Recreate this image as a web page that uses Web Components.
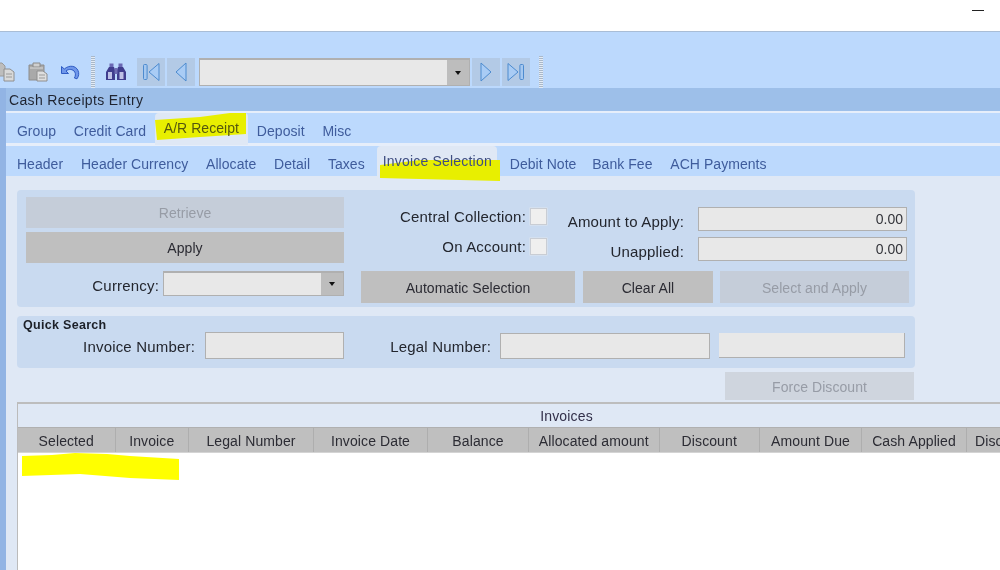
<!DOCTYPE html>
<html><head><meta charset="utf-8"><title>Cash Receipts Entry</title>
<style>
html,body{margin:0;padding:0;background:#fff}
body{width:1000px;height:570px;overflow:hidden;font-family:"Liberation Sans",Arial,sans-serif;color:#23262e}
</style></head><body>
<x-app></x-app>
<script>
function def(name,css,html,init){
  const t=document.createElement('template');
  t.innerHTML='<style>'+css+'</style>'+html;
  customElements.define(name,class extends HTMLElement{
    constructor(){super();this.attachShadow({mode:'open'}).appendChild(t.content.cloneNode(true));}
    connectedCallback(){if(init)init(this,this.shadowRoot);}
  });
}
const attr=(el,n,d='')=>el.hasAttribute(n)?el.getAttribute(n):d;

def('x-tbtn',`:host{display:flex;width:27.5px;height:28px;background:#b3cae6;align-items:center;justify-content:center}`,`<slot></slot>`);
def('x-tsep',`:host{display:block;width:4px;height:32px;background:repeating-linear-gradient(#a9b8c9 0 1px,#e3ebf5 1px 2px)}`,``);

def('x-combo',`:host{display:flex;box-sizing:border-box;background:#e8e8e8;border:1px solid #b0b0b0;border-top-width:2px}
.a{flex:1}.b{width:var(--bw,21px);background:#bdbdbd;display:flex;align-items:center;justify-content:center}
.b i{display:block;width:0;height:0;border:3.5px solid transparent;border-top:4px solid #111;border-bottom:0}`,
`<div class="a"></div><div class="b"><i></i></div>`);

def('x-toolbar',`:host{display:flex;align-items:flex-start;height:57px;box-sizing:border-box;background:#bcd9fd;padding-top:24px;border-top:1px solid #a9bdd6;overflow:hidden}
svg{display:block}
.row{display:flex;align-items:center;height:32px}
x-combo{width:271px;height:28px;--bw:22px}
`,
`<div class="row">
 <svg width="15" height="20" viewBox="0 0 15 20" style="margin:0 13px 0 0"><path d="M-5 1h7l3 3v10h-10z" fill="#bdbdbd" stroke="#9a9a9a"/><path d="M4 7h6l4 3v9H4z" fill="#d9d9d9" stroke="#8e8e8e"/><path d="M6 12h6M6 15h6" stroke="#9a9a9a"/></svg>
 <svg width="20" height="20" viewBox="0 0 20 20" style="margin-right:12px"><path d="M1 3h15v15H1z" fill="#a9a9a9" stroke="#8d8d8d"/><path d="M5 1h7v4H5z" fill="#cfcfcf" stroke="#8a8a8a"/><path d="M2 6h13" stroke="#d9d9d9"/><path d="M9 9h6l4 3v7H9z" fill="#dedede" stroke="#8e8e8e"/><path d="M11 13h6M11 16h6" stroke="#9a9a9a"/></svg>
 <svg width="20" height="16" viewBox="0 0 20 16" style="margin-right:11px"><path d="M1.500 2.500v7h7L6 7C8.600 4.600 13 5 14.800 8c1 1.900.7 4-.4 6l2.600.8c1.800-2.500 2.300-5.600 1-8.300C15.800 1.600 9.400.7 4.300 5z" fill="#6f97ea" stroke="#2f5cc4" stroke-width="1" stroke-linejoin="round"/></svg>
 <x-tsep></x-tsep>
 <svg width="20" height="18" viewBox="0 0 20 18" style="margin:0 11px"><path d="M3.500 .5h4v4h-4zM12.500 .5h4v4h-4z" fill="#6a68b4"/><path d="M3 4h5l1 3v10H0V9z" fill="#403d8e"/><path d="M12 4h5l3 5v8h-9V7z" fill="#403d8e"/><path d="M8.500 5h3v6h-3z" fill="#6f6db4"/><path d="M2 9h4v7H2zM13.500 9h4v7h-4z" fill="#bfc1e6"/></svg>
 <x-tbtn><svg width="20" height="20" viewBox="0 0 20 20"><rect x="2.500" y="2.500" width="3.600" height="15" rx="1" fill="#a5c8f0" stroke="#4d8bcf"/><path d="M18 1.500v17L8 10z" fill="#a9ccf5" stroke="#4d8bcf" stroke-linejoin="round"/></svg></x-tbtn>
 <x-tbtn style="margin:0 4px 0 2.500px"><svg width="14" height="22" viewBox="0 0 14 22"><path d="M12 2v18L2 11z" fill="#a9ccf5" stroke="#4d8bcf" stroke-linejoin="round"/></svg></x-tbtn>
 <x-combo></x-combo>
 <x-tbtn style="margin:0 2.500px"><svg width="14" height="22" viewBox="0 0 14 22"><path d="M2 2v18l10-9z" fill="#a9ccf5" stroke="#4d8bcf" stroke-linejoin="round"/></svg></x-tbtn>
 <x-tbtn style="margin-right:9px"><svg width="20" height="20" viewBox="0 0 20 20"><path d="M2 1.500v17L12 10z" fill="#a9ccf5" stroke="#4d8bcf" stroke-linejoin="round"/><rect x="13.900" y="2.500" width="3.600" height="15" rx="1" fill="#a5c8f0" stroke="#4d8bcf"/></svg></x-tbtn>
 <x-tsep></x-tsep>
</div>`);

def('x-tab',`:host{display:block;position:relative;box-sizing:border-box;padding:0 8.9px;height:100%;color:#3f5c9c}
span{position:relative;z-index:1;display:block;white-space:nowrap;font-size:14px;letter-spacing:.05px;line-height:var(--lh,36px)}
:host([active]){background:#dfe8f5;border-radius:4px 4px 0 0;color:var(--ac,#4a4a10);height:calc(100% + 2px)}
:host([active]) span{line-height:var(--alh,30px);letter-spacing:var(--als,.05px)}
svg{position:absolute;left:0;top:0;overflow:visible;z-index:0}
`,`<span><slot></slot></span>`,(el,r)=>{
  const p=attr(el,'mark');
  if(p&&!r.querySelector('svg')){
    const d=document.createElementNS('http://www.w3.org/2000/svg','svg');
    d.setAttribute('width','1');d.setAttribute('height','1');
    const g=document.createElementNS('http://www.w3.org/2000/svg','polygon');
    g.setAttribute('points',p);g.setAttribute('fill','#e8ef00');d.appendChild(g);r.appendChild(d);
  }
});
def('x-tabs',`:host{display:flex;background:#bcd9fd;height:var(--h,30px);padding-left:2px}`,`<slot></slot>`);

def('x-btn',`:host{display:flex;align-items:center;justify-content:center;box-sizing:border-box;background:#bfbfbf;color:#2b2b33;font-size:14px;letter-spacing:.05px;white-space:nowrap;padding-top:1px}
:host([disabled]){background:#c5cdd9;color:#979ca6}`,`<slot></slot>`);
def('x-field',`:host{display:flex;align-items:center;justify-content:flex-end;box-sizing:border-box;background:#e8e8e8;border:1.5px solid #b0b0b0;padding-right:3px;font-size:14px;color:#33343a}`,`<slot></slot>`);
def('x-check',`:host{display:block;box-sizing:border-box;width:17px;height:17px;background:#efefef;border:1.5px solid #c9cdd4;box-shadow:0 0 0 .5px #dfe5ee}`,``);
def('x-label',`:host{display:block;font-size:15px;letter-spacing:.18px;white-space:nowrap;text-align:right;color:#23262e}`,`<slot></slot>`);
def('x-panel',`:host{display:block;box-sizing:border-box;background:#c9daf0;border-radius:4px;width:898px}`,`<slot></slot>`);

def('x-grid',`:host{display:block;position:relative;width:1098px;height:172px;background:#fff;border-left:1px solid #bbb;border-top:2px solid #bdbdbd;box-sizing:border-box}
.cap{height:23px;line-height:25px;text-align:center;background:#dfe8f5;font-size:14px;letter-spacing:.15px;color:#33304a}
.head{display:grid;height:26px;background:#bfbfbf;border-top:1px solid #b0b0b0;border-bottom:1px solid #d4d4d4;box-sizing:border-box;
 grid-template-columns:97.500px 73.500px 125px 114px 101px 130.500px 100.500px 102px 105px 150px}
.head div{font-size:14px;letter-spacing:.1px;line-height:26px;text-align:center;white-space:nowrap;border-right:1px solid #aeaeae;color:#2c2c34;box-sizing:border-box;overflow:hidden}
.mark{position:absolute;left:4px;top:49px;overflow:visible}
`,`<div class="cap">Invoices</div>
<div class="head"><div>Selected</div><div>Invoice</div><div>Legal Number</div><div>Invoice Date</div><div>Balance</div><div>Allocated amount</div><div>Discount</div><div>Amount Due</div><div>Cash Applied</div><div style="text-align:left;padding-left:8px">Discount</div></div>
<svg class="mark" width="158" height="28" viewBox="0 0 158 28"><polygon points="0,3 30,2 53,0 85,1 108,3 157,6 157,27 108,25 58,21 0,23" fill="#ffff00"/></svg>`);

def('x-app',`:host{display:flex;flex-direction:column;width:1000px;height:570px;overflow:hidden;filter:blur(.35px)}
.top{height:31px;background:#fff;display:flex;justify-content:flex-end;padding:10px 16px 0 0;box-sizing:border-box}
.top i{display:block;width:12px;height:1px;background:#222}
.body{flex:1;display:flex;min-height:0}
.strip{width:6px;background:#92b4e4;flex:none}
.main{flex:1;display:flex;flex-direction:column;background:#dfe8f5;min-width:0}
.title{height:23px;background:#9dbfe9;font-size:14px;letter-spacing:.35px;line-height:24px;padding-left:3px;color:#1f2430;flex:none}
.gap{height:2px;background:#e6eefa;flex:none}.gap3{height:3px;background:#e6eefa;flex:none}
x-tabs.r1{--h:30px;--lh:37px;--alh:30px;--ac:#55580e}
x-tabs.r2{--h:30px;--lh:36px;--alh:31px;--ac:#3f4e80;--als:.2px}
.content{flex:1;padding:14px 0 0 11px;min-height:0;overflow:hidden}
.p1{height:117px;padding:7px 0 0 9px;display:flex;gap:17px}
.col1{width:318px;display:flex;flex-direction:column}
.col1 x-btn{height:31px;margin-bottom:4px}
.cur{display:flex;align-items:center;justify-content:flex-end;gap:4px;margin-top:4px}
.cur x-label{padding-top:4px}
.cur x-combo{width:181px;height:25px;--bw:22px}
.col2{width:548px;display:flex;flex-direction:column}
.upper{display:flex;height:74px;align-items:flex-start}
.chk{width:186px;display:flex;flex-direction:column;gap:13px;padding-top:11px}
.chk div{display:flex;align-items:center;justify-content:flex-end;gap:4px;height:17px}
.amt{display:grid;grid-template-columns:137px 209px;column-gap:14px;row-gap:6px;padding-top:10px;align-items:center}
.amt x-field{height:24px}
.amt x-label{padding-top:5px}
.btns{display:flex;gap:7px}
.btns x-btn{height:32px}
.p2{height:52px;margin-top:9px;padding:2px 0 0 6px}
.qt{font-size:12.5px;font-weight:bold;letter-spacing:.3px;line-height:14px;color:#1c2028;height:14px}
.qr{display:flex;align-items:center;height:27px}
.qr x-label{padding-top:1px}
.fd{display:flex;width:898px;justify-content:flex-end;height:34px;padding-top:4px;box-sizing:border-box}
.fd x-btn{width:189px;height:28px;margin-right:1px}
`,`<div class="top"><i></i></div>
<x-toolbar></x-toolbar>
<div class="body"><div class="strip"></div><div class="main">
 <div class="title">Cash Receipts Entry</div>
 <div class="gap"></div>
 <x-tabs class="r1"><x-tab>Group</x-tab><x-tab>Credit Card</x-tab><x-tab active mark="0,7 45,4 75,0 91,0 91,21 45,24 2,27">A/R Receipt</x-tab><x-tab>Deposit</x-tab><x-tab>Misc</x-tab></x-tabs>
 <div class="gap3"></div>
 <x-tabs class="r2"><x-tab>Header</x-tab><x-tab>Header Currency</x-tab><x-tab>Allocate</x-tab><x-tab>Detail</x-tab><x-tab>Taxes</x-tab><x-tab active style="margin-left:3px;padding-left:6px;padding-right:5px;margin-right:4px" mark="3,19 43,14 123,14 123,35 43,33 3,32">Invoice Selection</x-tab><x-tab style="padding-right:6.9px">Debit Note</x-tab><x-tab>Bank Fee</x-tab><x-tab>ACH Payments</x-tab></x-tabs>
 <div class="content">
  <x-panel class="p1" style="display:flex">
   <div class="col1"><x-btn disabled>Retrieve</x-btn><x-btn>Apply</x-btn><div class="cur"><x-label>Currency:</x-label><x-combo></x-combo></div></div>
   <div class="col2">
    <div class="upper">
     <div class="chk"><div><x-label>Central Collection:</x-label><x-check></x-check></div><div><x-label>On Account:</x-label><x-check></x-check></div></div>
     <div class="amt"><x-label>Amount to Apply:</x-label><x-field>0.00</x-field><x-label>Unapplied:</x-label><x-field>0.00</x-field></div>
    </div>
    <div class="btns"><x-btn style="width:214px">Automatic Selection</x-btn><x-btn style="width:130px;margin-left:1px">Clear All</x-btn><x-btn disabled style="width:189px">Select and Apply</x-btn></div>
   </div>
  </x-panel>
  <x-panel class="p2">
   <div class="qt">Quick Search</div>
   <div class="qr"><x-label style="width:172px">Invoice Number:</x-label><x-field style="width:139px;height:27px;margin-left:10px"></x-field><x-label style="width:147px">Legal Number:</x-label><x-field style="width:210px;height:26px;margin-left:9px"></x-field><x-field style="width:186px;height:25px;margin-left:9px;border-width:0 1.5px 1.5px 0"></x-field></div>
  </x-panel>
  <div class="fd"><x-btn disabled style="background:#cfd5de">Force Discount</x-btn></div>
  <x-grid></x-grid>
 </div>
</div></div>`);
</script>
</body></html>
